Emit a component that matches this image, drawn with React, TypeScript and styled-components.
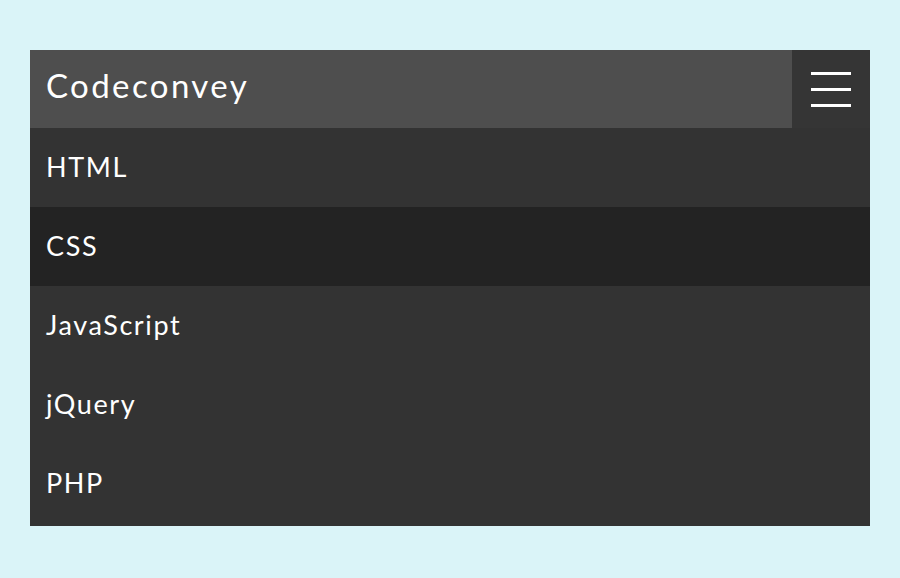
import React, { useState } from 'react'
import styled, { createGlobalStyle } from 'styled-components'

const items = ['HTML', 'CSS', 'JavaScript', 'jQuery', 'PHP']

const GlobalStyle = createGlobalStyle`
  html, body {
    margin: 0;
    padding: 0;
    background: #daf4f8;
  }
  body {
    font-family: Lato, 'Open Sans', sans-serif;
  }
`

export default function App(): JSX.Element {
  const [active, setActive] = useState<string>('CSS')

  return (
    <>
      <GlobalStyle />
      <Page>
        <Menu>
          <Header>
            <Brand>Codeconvey</Brand>
            <Toggle aria-label="menu">
              <Bar />
              <Bar />
              <Bar />
            </Toggle>
          </Header>
          <List>
            {items.map((item) => (
              <Item
                key={item}
                $active={item === active}
                onClick={() => setActive(item)}
              >
                {item}
              </Item>
            ))}
          </List>
        </Menu>
      </Page>
    </>
  )
}

const Page = styled.div`
  width: 900px;
  height: 578px;
  padding: 50px 30px 0;
  box-sizing: border-box;
`

const Menu = styled.nav`
  width: 840px;
  background: #333333;
`

const Header = styled.div`
  display: flex;
  height: 78px;
`

const Brand = styled.div`
  flex: 1;
  display: flex;
  align-items: center;
  padding: 0 16px 8px;
  background: #4e4e4e;
  color: #ffffff;
  font-size: 33px;
  font-weight: 400;
  letter-spacing: 2.4px;
`

const Toggle = styled.button`
  width: 78px;
  border: none;
  background: #353535;
  display: flex;
  flex-direction: column;
  justify-content: center;
  align-items: center;
  gap: 13px;
  padding: 0;
  cursor: pointer;
`

const Bar = styled.span`
  display: block;
  width: 40px;
  height: 3px;
  background: #ffffff;
`

const List = styled.ul`
  list-style: none;
  margin: 0;
  padding: 0 0 3px;
`

const Item = styled.li<{ $active: boolean }>`
  height: 79px;
  display: flex;
  align-items: center;
  padding: 0 16px 2px;
  box-sizing: border-box;
  color: #ffffff;
  font-size: 27px;
  font-weight: 400;
  letter-spacing: 1.6px;
  background: ${(p) => (p.$active ? '#232323' : '#333333')};
  cursor: pointer;
`
